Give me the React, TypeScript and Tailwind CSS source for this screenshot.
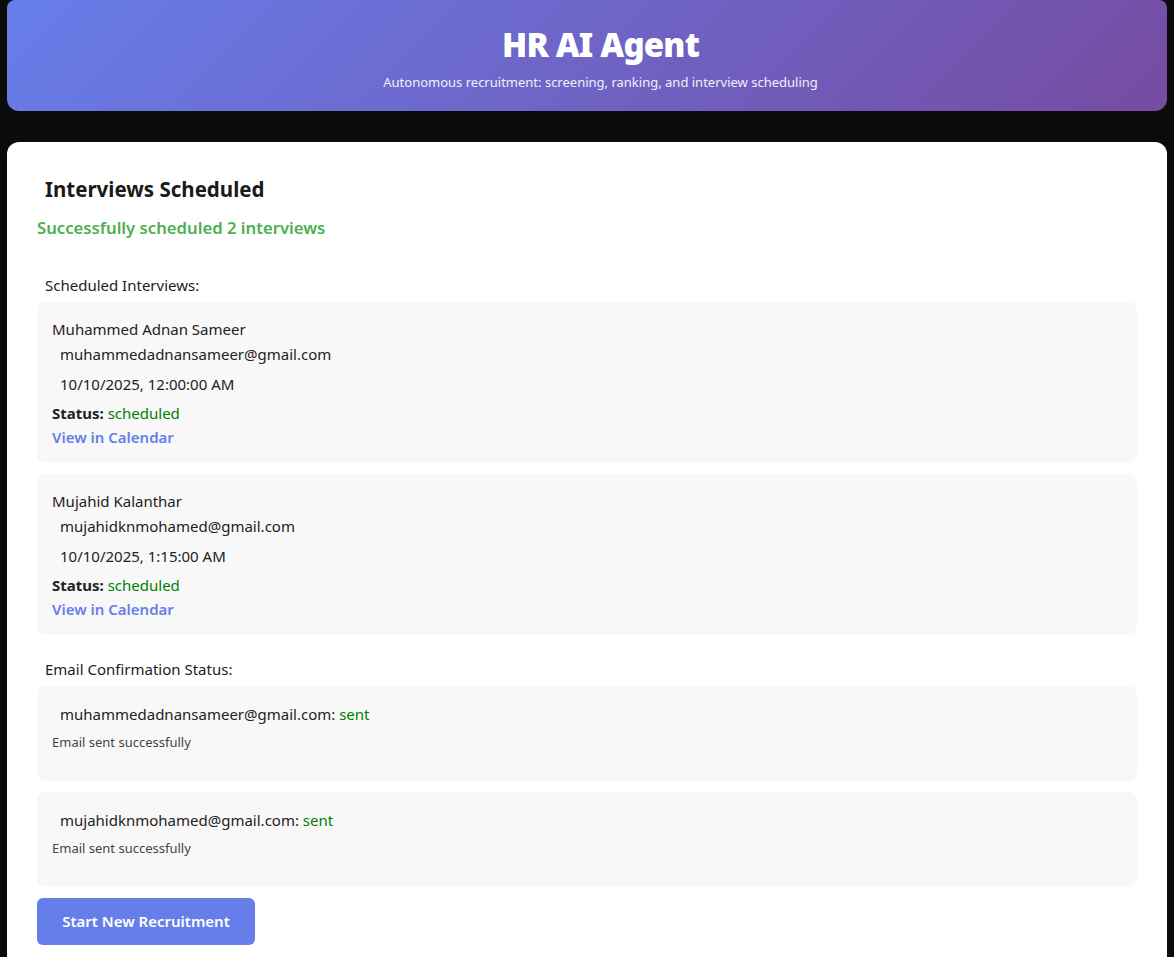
import React from "react";

const font = { fontFamily: '"Noto Sans", "Open Sans", sans-serif' };

function InterviewCard({ name, email, date }: { name: string; email: string; date: string }) {
  return (
    <div className="bg-[#f8f8f8] rounded-lg px-[15px] pt-[15px] pb-[14px] h-[161px]">
      <div className="text-[15px] leading-6 text-[#222]">{name}</div>
      <div className="text-[15px] leading-6 text-[#222] pl-2 mt-[1px]">{email}</div>
      <div className="text-[15px] leading-6 text-[#222] pl-2 mt-[6px]">{date}</div>
      <div className="text-[15px] leading-6 text-[#222] mt-[5px]">
        <span className="font-bold">Status:</span> <span className="text-[#008000]">scheduled</span>
      </div>
      <div className="text-[15px] leading-6 text-[#667eea] font-semibold">View in Calendar</div>
    </div>
  );
}

function EmailCard({ email }: { email: string }) {
  return (
    <div className="bg-[#f8f8f8] rounded-lg px-[15px] pt-[16px] h-[95px]">
      <div className="text-[15px] leading-6 text-[#222] pl-2">
        {email}: <span className="text-[#008000]">sent</span>
      </div>
      <div className="text-[13px] leading-5 text-[#444] mt-[6px]">Email sent successfully</div>
    </div>
  );
}

export default function App() {
  return (
    <div className="min-h-[957px] bg-[#0b0b0b] px-[7px]" style={font}>
      <div className="h-[111px] rounded-b-xl rounded-t-lg bg-[linear-gradient(135deg,#667eea_0%,#764ba2_100%)] flex flex-col items-center pt-[24px] pl-[27px]">
        <h1 className="text-[33px] leading-[42px] font-black text-white tracking-tight">HR AI Agent</h1>
        <p className="text-[13px] leading-5 text-white/90 mt-[6px]">
          Autonomous recruitment: screening, ranking, and interview scheduling
        </p>
      </div>
      <div className="mt-[31px] bg-white rounded-t-xl px-[30px] pt-[33px] pb-[12px]">
        <h2 className="text-[20.5px] leading-7 font-bold text-[#1a1a1a] pl-2">Interviews Scheduled</h2>
        <p className="text-[16.7px] leading-6 font-semibold text-[#4caf50] mt-[13px]">Successfully scheduled 2 interviews</p>
        <p className="text-[15px] leading-6 text-[#222] pl-2 mt-[33px]">Scheduled Interviews:</p>
        <div className="flex flex-col gap-[11px] mt-[5px]">
          <InterviewCard name="Muhammed Adnan Sameer" email="muhammedadnansameer@gmail.com" date="10/10/2025, 12:00:00 AM" />
          <InterviewCard name="Mujahid Kalanthar" email="mujahidknmohamed@gmail.com" date="10/10/2025, 1:15:00 AM" />
        </div>
        <p className="text-[15px] leading-6 text-[#222] pl-2 mt-[22px]">Email Confirmation Status:</p>
        <div className="flex flex-col gap-[11px] mt-[5px]">
          <EmailCard email="muhammedadnansameer@gmail.com" />
          <EmailCard email="mujahidknmohamed@gmail.com" />
        </div>
        <button className="mt-[11px] h-[47px] w-[218px] rounded-md bg-[#667eea] text-white text-[15px] font-semibold">
          Start New Recruitment
        </button>
      </div>
    </div>
  );
}
